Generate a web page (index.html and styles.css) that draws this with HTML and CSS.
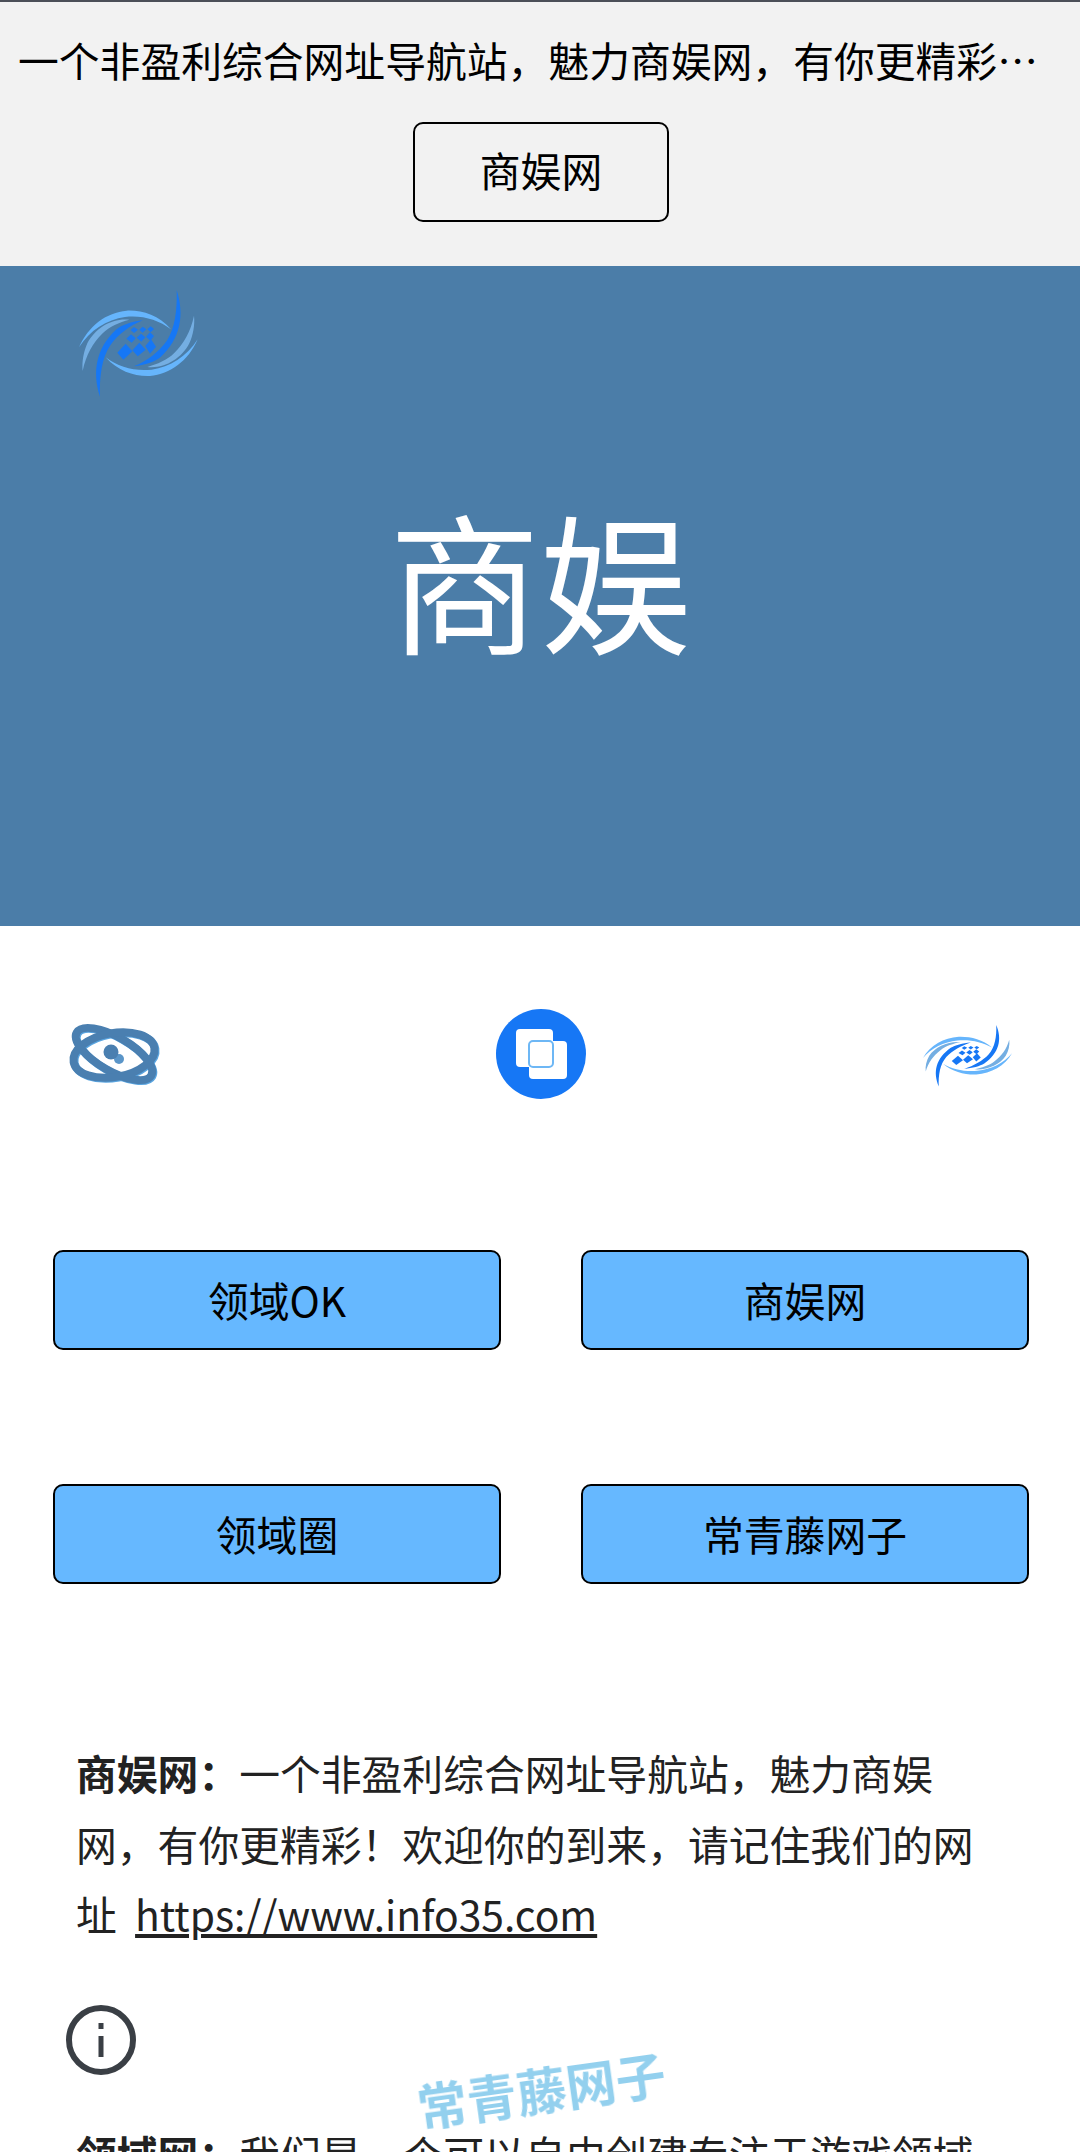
FILE: index.html
```html
<!DOCTYPE html>
<html lang="zh-CN">
  <head>
    <meta charset="UTF-8" />
    <title>商娱网</title>
    <link rel="stylesheet" href="styles.css">
  </head>
  <body>
    <svg class="defs" width="0" height="0">
      <defs>
        <g id="swirl-half">
          <path class="s-light" d="M137 247C175 290 225 305 270 303C330 298 385 258 413 193C380 245 330 276 275 284C225 290 175 276 137 247Z"/>
          <path class="s-mid" d="M402 122C392 170 372 205 342 235C322 255 292 268 262 276C312 282 364 252 388 205C399 180 405 150 402 122Z"/>
          <path class="s-dark" d="M350 45C374 120 362 190 302 246C285 260 255 270 222 274C260 258 296 232 320 198C345 160 352 105 350 45Z"/>
        </g>
        <g id="swirl">
          <use href="#swirl-half"/>
          <use href="#swirl-half" transform="rotate(180 235 205)"/>
          <g class="s-dark">
            <path d="M222 156L234 164L222 174L212 165Z"/>
            <path d="M248 155L259 163L248 173L238 164Z"/>
            <path d="M272 154L282 162L272 172L262 163Z"/>
            <path d="M213 178L227 190L215 203L199 191Z"/>
            <path d="M243 176L256 187L244 200L230 188Z"/>
            <path d="M270 172L282 183L271 197L258 185Z"/>
            <path d="M197 206L217 229L190 254L172 233Z"/>
            <path d="M238 203L257 224L233 244L217 226Z"/>
            <path d="M273 193L288 215L270 236L256 213Z"/>
          </g>
        </g>
      </defs>
    </svg>

    <section class="topbar">
      <p class="slogan">一个非盈利综合网址导航站，魅力商娱网，有你更精彩！欢迎你的到来，请记住我们的网址</p>
      <a class="btn-top">商娱网</a>
    </section>

    <section class="hero">
      <svg class="hero-logo" viewBox="0 0 450 390"><use href="#swirl"/></svg>
      <h1>商娱</h1>
    </section>

    <section class="icons">
      <svg class="icon" viewBox="0 0 130 130">
        <g class="orbit-back">
          <ellipse cx="65" cy="65" rx="43" ry="17" transform="rotate(30 65 65)"/>
          <ellipse cx="65" cy="66" rx="41" ry="22" transform="rotate(-10 65 66)"/>
        </g>
        <g class="orbit">
          <ellipse cx="64" cy="64" rx="43" ry="17" transform="rotate(30 64 64)"/>
          <ellipse cx="64" cy="65" rx="41" ry="22" transform="rotate(-10 64 65)"/>
        </g>
        <circle class="pupil-b" cx="69" cy="69" r="5"/>
        <circle class="pupil" cx="61" cy="62" r="7.5"/>
      </svg>
      <svg class="icon" viewBox="0 0 130 130">
        <circle class="disc" cx="65" cy="64" r="45"/>
        <rect class="sq" x="40" y="39" width="37" height="38" rx="4"/>
        <rect class="sq" x="53" y="51" width="38" height="38" rx="4"/>
        <rect class="sq-line" x="53" y="51" width="24" height="26" rx="4"/>
      </svg>
      <svg class="icon" viewBox="-31 -137 520 677" preserveAspectRatio="none"><use href="#swirl"/></svg>
    </section>

    <section class="links">
      <a class="btn">领域OK</a>
      <a class="btn">商娱网</a>
      <a class="btn">领域圈</a>
      <a class="btn">常青藤网子</a>
    </section>

    <section class="about">
      <p><strong>商娱网：</strong>一个非盈利综合网址导航站，魅力商娱网，有你更精彩！欢迎你的到来，请记住我们的网址 &nbsp;<a href="#">https://www.info35.com</a></p>
      <svg class="info" viewBox="0 0 70 70">
        <circle cx="35" cy="35" r="32"/>
        <path class="info-mark" d="M35 31V52M35 18V24"/>
      </svg>
      <p class="second"><strong>领域网：</strong>我们是一个可以自由创建专注于游戏领域的网站平台</p>
    </section>

    <div class="watermark">常青藤网子</div>
  </body>
</html>
```

FILE: styles.css
```css
html,
body {
  margin: 0;
  height: 2152px;
  overflow: hidden;
}

body {
  font-family: "Noto Sans CJK SC", "Noto Sans", sans-serif;
  font-size: 40.8px;
  color: #000;
  background-color: #fff;
}

.defs {
  display: block;
  height: 0;
}

.s-light {
  fill: #66b5fc;
}

.s-mid {
  fill: #74aee2;
}

.s-dark {
  fill: #1677f5;
}

.topbar {
  box-sizing: border-box;
  height: 266px;
  border-top: 2px solid #4b4f58;
  background-color: #f2f2f2;
  padding: 0 18px;
  text-align: center;
}

.slogan {
  margin: 0;
  height: 120px;
  line-height: 116px;
  text-align: left;
  white-space: nowrap;
  overflow: hidden;
  text-overflow: ellipsis;
}

.btn-top {
  display: block;
  box-sizing: border-box;
  width: 256px;
  height: 100px;
  line-height: 92px;
  margin: 0 auto;
  position: relative;
  left: 1px;
  border: 2px solid #000;
  border-radius: 10px;
}

.hero {
  box-sizing: border-box;
  height: 660px;
  padding: 9px 0 0 60px;
  background-color: #4b7da8;
  color: #fff;
}

.hero-logo {
  display: block;
  width: 150px;
  height: 130px;
}

.hero h1 {
  margin: 62px 0 0 -60px;
  font-size: 151px;
  font-weight: 400;
  line-height: 220px;
  text-align: center;
}

.icons {
  box-sizing: border-box;
  height: 324px;
  padding: 64px 49px 0 50px;
  display: flex;
  justify-content: space-between;
  align-items: flex-start;
}

.icon {
  width: 130px;
  height: 130px;
}

.orbit,
.orbit-back {
  fill: none;
  stroke-width: 8;
}

.orbit {
  stroke: #4a7fb0;
}

.orbit-back {
  stroke: #5aa5e0;
}

.pupil {
  fill: #4a7fb0;
}

.pupil-b {
  fill: #5a95c8;
}

.disc {
  fill: #1677f5;
}

.sq {
  fill: #fff;
}

.sq-line {
  fill: none;
  stroke: #6db7f5;
  stroke-width: 2;
}

.links {
  display: grid;
  grid-template-columns: 448px 448px;
  column-gap: 80px;
  row-gap: 134px;
  padding-left: 53px;
}

.btn {
  box-sizing: border-box;
  height: 100px;
  line-height: 96px;
  border: 2px solid #000;
  border-radius: 10px;
  background-color: #66b8ff;
  text-align: center;
}

.about {
  padding: 154px 77px 0 76px;
  color: #222;
  line-height: 70.5px;
}

.about p {
  margin: 0;
}

.about a {
  color: #222;
}

.about .second {
  margin-top: 44px;
}

.info {
  display: block;
  width: 70px;
  height: 70px;
  margin: 55px 0 0 -10px;
  fill: none;
  stroke: #3a3f45;
  stroke-width: 6;
}

.info-mark {
  stroke-width: 5;
}

/* watermark sits over the page */
.watermark {
  position: fixed;
  left: 416px;
  top: 2058px;
  width: 250px;
  font-size: 50px;
  line-height: 60px;
  font-weight: 700;
  white-space: nowrap;
  color: #93d0ee;
  transform: rotate(-8deg);
}
```
